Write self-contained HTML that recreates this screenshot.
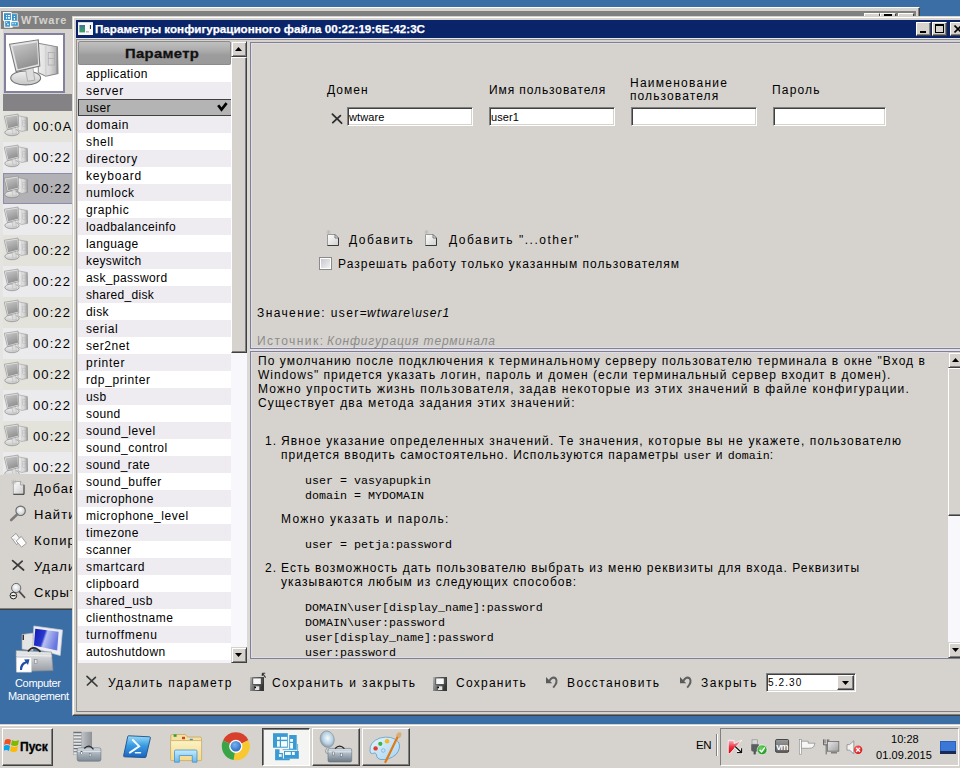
<!DOCTYPE html>
<html><head><meta charset="utf-8">
<style>
*{margin:0;padding:0;box-sizing:border-box}
html,body{width:960px;height:768px;overflow:hidden;background:#3a6ea5;font-family:"Liberation Sans",sans-serif;font-size:12px;color:#000}
.a{position:absolute}
.t{position:absolute;white-space:pre;line-height:16px}
.m{font-family:"Liberation Mono",monospace;font-size:11.67px;letter-spacing:0}
</style></head><body>
<div class="a" style="left:0px;top:7px;width:920px;height:603px;background:#d6d3ce;border-top:1px solid #fff;border-right:1px solid #404040;border-bottom:1px solid #404040"></div>
<div class="a" style="left:0px;top:8px;width:919px;height:601px;border-right:1px solid #808080;border-bottom:1px solid #808080"></div>
<div class="a" style="left:1px;top:11px;width:915px;height:18px;background:#808080"></div>
<div class="a" style="left:0px;top:29px;width:3px;height:446px;background:#e4e4e0"></div>
<svg class="a" style="left:2px;top:11px" width="18" height="18" viewBox="2 11 18 18">
<path d="M3 12 H11.6 V13.4 H17.6 V21.4 H18.6 V26.6 H12.6 V27.7 H4.2 V20.7 H3 Z" fill="#fff"/>
<rect x="4" y="13.2" width="6.9" height="6.8" fill="#3a94cc"/>
<rect x="12" y="14.1" width="4.9" height="6.7" fill="#3a94cc"/>
<rect x="5.2" y="21.1" width="4.8" height="5.6" fill="#3a94cc"/>
<rect x="11.3" y="22.2" width="6.5" height="3.6" fill="#3a94cc"/>
<g fill="#f0faff"><rect x="6" y="15" width="1.1" height="1.1"/><rect x="8" y="15" width="2" height="1.1"/><rect x="6" y="17" width="1.1" height="1.8"/><rect x="8" y="17" width="2" height="1.8"/>
<rect x="13.8" y="16" width="1.2" height="1"/><rect x="13.8" y="18" width="1.2" height="1.9"/>
<rect x="6.2" y="21.8" width="1" height="1.2"/><rect x="7.2" y="23.6" width="1.5" height="1.6"/>
<rect x="12.2" y="23.2" width="1.5" height="1.1"/><rect x="14.7" y="23.2" width="1.3" height="1.1"/></g>
</svg>
<div class="t" style="left:21px;top:12px;font-size:11px;letter-spacing:0.8px;font-weight:700;color:#d6d3ce;">WTware</div>
<div class="a" style="left:864px;top:13px;width:16px;height:14px;background:#d6d3ce;border-top:1px solid #fff;border-left:1px solid #fff;border-right:1px solid #404040"></div>
<div class="a" style="left:880px;top:13px;width:16px;height:14px;background:#d6d3ce;border-top:1px solid #fff;border-left:1px solid #fff;border-right:1px solid #404040"></div>
<div class="a" style="left:898px;top:13px;width:16px;height:14px;background:#d6d3ce;border-top:1px solid #fff;border-left:1px solid #fff;border-right:1px solid #404040"></div>
<div class="a" style="left:884px;top:14px;width:8px;height:2px;background:#000"></div>
<div class="a" style="left:4px;top:33px;width:61px;height:60px;background:#fff;border:2px solid #8282a0"></div>
<svg class="a" style="left:0;top:0;width:0;height:0;position:absolute">
<defs>
<linearGradient id="scr" x1="0" y1="0" x2="0.4" y2="1"><stop offset="0" stop-color="#cacaca"/><stop offset="1" stop-color="#929292"/></linearGradient>
<linearGradient id="twr" x1="0" y1="0" x2="1" y2="0"><stop offset="0" stop-color="#eeeeee"/><stop offset="0.6" stop-color="#d8d8d8"/><stop offset="1" stop-color="#a8a8a8"/></linearGradient>
<linearGradient id="bse" x1="0" y1="0" x2="0" y2="1"><stop offset="0" stop-color="#f0f0f0"/><stop offset="1" stop-color="#c6c6c6"/></linearGradient>
<symbol id="comp" viewBox="9.5 39 49.5 48">
<path d="M38.5 44 L57.5 47.5 L58 74 L46 76.5 L38.5 73 Z" fill="url(#twr)" stroke="#8a8a8a" stroke-width="1"/>
<path d="M46 46.5 L46 76.5" stroke="#c4c4c4" stroke-width="0.8"/>
<path d="M56.5 48 L57.5 48 L58 74 L56.5 74.5 Z" fill="#8e8e8e"/>
<rect x="48.3" y="53" width="6.3" height="12.5" fill="none" stroke="#acacac" stroke-width="0.8"/>
<path d="M48.3 59 H54.6" stroke="#acacac" stroke-width="0.8"/>
<ellipse cx="26" cy="78.3" rx="14.8" ry="6.9" fill="url(#bse)" stroke="#767676" stroke-width="1.1"/>
<path d="M25.5 68 L33 66.5 L35 80.5 L28 81.5 Z" fill="#dcdcdc" stroke="#a4a4a4" stroke-width="0.8"/>
<path d="M10 45 L38.5 40.5 L40 66.5 L16.5 72 Z" fill="#e4e4e4" stroke="#7c7c7c" stroke-width="1.1"/>
<path d="M12.8 47 L37.2 43.2 L38.3 64.8 L18.2 69.6 Z" fill="url(#scr)"/>
</symbol>
</defs></svg>
<svg class="a" style="left:9px;top:38px" width="50" height="49"><use href="#comp"/></svg>
<div class="a" style="left:3px;top:94px;width:70px;height:17px;background:#848284"></div>
<div class="a" style="left:3px;top:111px;width:70px;height:31px;background:#e3e3dc"></div>
<svg class="a" style="left:4px;top:113px;overflow:hidden" width="24" height="24"><svg width="24" height="24"><use href="#comp"/></svg></svg>
<div class="t" style="left:33px;top:119px;font-size:13px;letter-spacing:1.1px;">00:0A</div>
<div class="a" style="left:3px;top:142px;width:70px;height:31px;background:#ebebee"></div>
<svg class="a" style="left:4px;top:144px;overflow:hidden" width="24" height="24"><svg width="24" height="24"><use href="#comp"/></svg></svg>
<div class="t" style="left:33px;top:150px;font-size:13px;letter-spacing:1.1px;">00:22</div>
<div class="a" style="left:3px;top:173px;width:70px;height:31px;background:#b2b2b6;border:1px solid #8c8cac"></div>
<svg class="a" style="left:4px;top:175px;overflow:hidden" width="24" height="24"><svg width="24" height="24"><use href="#comp"/></svg></svg>
<div class="t" style="left:33px;top:181px;font-size:13px;letter-spacing:1.1px;">00:22</div>
<div class="a" style="left:3px;top:204px;width:70px;height:31px;background:#ebebee"></div>
<svg class="a" style="left:4px;top:206px;overflow:hidden" width="24" height="24"><svg width="24" height="24"><use href="#comp"/></svg></svg>
<div class="t" style="left:33px;top:212px;font-size:13px;letter-spacing:1.1px;">00:22</div>
<div class="a" style="left:3px;top:235px;width:70px;height:31px;background:#e3e3dc"></div>
<svg class="a" style="left:4px;top:237px;overflow:hidden" width="24" height="24"><svg width="24" height="24"><use href="#comp"/></svg></svg>
<div class="t" style="left:33px;top:243px;font-size:13px;letter-spacing:1.1px;">00:22</div>
<div class="a" style="left:3px;top:266px;width:70px;height:31px;background:#ebebee"></div>
<svg class="a" style="left:4px;top:268px;overflow:hidden" width="24" height="24"><svg width="24" height="24"><use href="#comp"/></svg></svg>
<div class="t" style="left:33px;top:274px;font-size:13px;letter-spacing:1.1px;">00:22</div>
<div class="a" style="left:3px;top:297px;width:70px;height:31px;background:#e3e3dc"></div>
<svg class="a" style="left:4px;top:299px;overflow:hidden" width="24" height="24"><svg width="24" height="24"><use href="#comp"/></svg></svg>
<div class="t" style="left:33px;top:305px;font-size:13px;letter-spacing:1.1px;">00:22</div>
<div class="a" style="left:3px;top:328px;width:70px;height:31px;background:#ebebee"></div>
<svg class="a" style="left:4px;top:330px;overflow:hidden" width="24" height="24"><svg width="24" height="24"><use href="#comp"/></svg></svg>
<div class="t" style="left:33px;top:336px;font-size:13px;letter-spacing:1.1px;">00:22</div>
<div class="a" style="left:3px;top:359px;width:70px;height:31px;background:#e3e3dc"></div>
<svg class="a" style="left:4px;top:361px;overflow:hidden" width="24" height="24"><svg width="24" height="24"><use href="#comp"/></svg></svg>
<div class="t" style="left:33px;top:367px;font-size:13px;letter-spacing:1.1px;">00:22</div>
<div class="a" style="left:3px;top:390px;width:70px;height:31px;background:#ebebee"></div>
<svg class="a" style="left:4px;top:392px;overflow:hidden" width="24" height="24"><svg width="24" height="24"><use href="#comp"/></svg></svg>
<div class="t" style="left:33px;top:398px;font-size:13px;letter-spacing:1.1px;">00:22</div>
<div class="a" style="left:3px;top:421px;width:70px;height:31px;background:#e3e3dc"></div>
<svg class="a" style="left:4px;top:423px;overflow:hidden" width="24" height="24"><svg width="24" height="24"><use href="#comp"/></svg></svg>
<div class="t" style="left:33px;top:429px;font-size:13px;letter-spacing:1.1px;">00:22</div>
<div class="a" style="left:3px;top:452px;width:70px;height:22px;background:#ebebee"></div>
<svg class="a" style="left:4px;top:454px;overflow:hidden" width="24" height="20"><svg width="24" height="24"><use href="#comp"/></svg></svg>
<div class="t" style="left:33px;top:460px;font-size:13px;letter-spacing:1.1px;">00:22</div>
<div class="t" style="left:34px;top:481px;font-size:13px;letter-spacing:1.1px;">Добавить</div>
<div class="t" style="left:34px;top:507px;font-size:13px;letter-spacing:1.1px;">Найти</div>
<div class="t" style="left:34px;top:533px;font-size:13px;letter-spacing:1.1px;">Копировать</div>
<div class="t" style="left:34px;top:559px;font-size:13px;letter-spacing:1.1px;">Удалить</div>
<div class="t" style="left:34px;top:585px;font-size:13px;letter-spacing:1.1px;">Скрыть</div>
<svg class="a" style="left:4px;top:476px" width="28" height="128" viewBox="4 476 28 128">
<defs><linearGradient id="mdg" x1="0" y1="0" x2="1" y2="1"><stop offset="0" stop-color="#ffffff"/><stop offset="1" stop-color="#c8c8c8"/></linearGradient>
<radialGradient id="lens" cx="0.45" cy="0.4" r="0.6"><stop offset="0" stop-color="#ffffff"/><stop offset="1" stop-color="#c4c8cc"/></radialGradient></defs>
<path d="M13.4 481.5 H20.6 L24 484.9 V494.3 H13.4 Z" fill="url(#mdg)" stroke="#a0a0a0" stroke-width="0.8"/>
<path d="M24 484.9 V494.3 H13.4" fill="none" stroke="#3a3a3a" stroke-width="1"/>
<path d="M20.6 481.5 V484.9 H24" fill="#e4e4e4" stroke="#777" stroke-width="0.6"/>
<path d="M11.6 480.2 L15.8 484.4 M15.8 480.2 L11.6 484.4 M13.7 479.6 V485 M11 482.3 H16.4" stroke="#b4b4b4" stroke-width="0.7"/>
<circle cx="20.6" cy="510.8" r="4.7" fill="url(#lens)" stroke="#6a6a6a" stroke-width="1.1"/>
<path d="M17.2 514.4 L11.2 520" stroke="#7a7a7a" stroke-width="2.6" stroke-linecap="round"/>
<path d="M11.2 537.6 L16 533.4 L21.2 540.4 L16.6 544.6 Z" fill="#f8f8f8" stroke="#8a8a8a" stroke-width="0.8"/>
<path d="M16.2 541 L21.2 536.4 L26.4 543.2 L21.6 547.2 Z" fill="#fcfcfc" stroke="#8a8a8a" stroke-width="0.8"/>
<path d="M13.2 539.5 Q14.5 538.5 15.5 540" fill="none" stroke="#aaa" stroke-width="0.6"/>
<path d="M12.6 560.6 L23.6 570 M22.2 561.2 L13.4 569.2" stroke="#3a3a3a" stroke-width="1.7" stroke-linecap="round"/>
<circle cx="16.2" cy="588" r="4.6" fill="url(#lens)" stroke="#6a6a6a" stroke-width="1"/>
<path d="M19.4 591.6 L24.6 597.4" stroke="#4a4a4a" stroke-width="1.6" stroke-linecap="round"/>
<circle cx="13.4" cy="595.6" r="3.3" fill="#f4f4f4" stroke="#222" stroke-width="1"/>
<path d="M11.3 595.6 H15.5" stroke="#222" stroke-width="1.3"/>
</svg>
<svg class="a" style="left:12px;top:620px" width="54" height="56" viewBox="12 620 54 56">
<defs><linearGradient id="cmb" x1="0" y1="0" x2="1" y2="0.3"><stop offset="0" stop-color="#1018b0"/><stop offset="0.45" stop-color="#2a38d0"/><stop offset="0.55" stop-color="#b8c0f0"/><stop offset="1" stop-color="#6878e0"/></linearGradient>
<linearGradient id="cmt" x1="0" y1="0" x2="0" y2="1"><stop offset="0" stop-color="#eeeeee"/><stop offset="0.5" stop-color="#c0c4c8"/><stop offset="1" stop-color="#9a9ea4"/></linearGradient></defs>
<path d="M22 634.5 L33 633 L33 651 L22 649 Z" fill="#e4e4e4" stroke="#b0b0b0" stroke-width="0.6"/>
<path d="M22.5 635 L24 634.8 L24 640 L22.5 640 Z" fill="#333"/>
<path d="M33.8 626 L62.5 630 L60.2 655.5 L33 648 Z" fill="#eceef4" stroke="#c8cad4" stroke-width="0.7"/>
<path d="M35.3 628.7 L58.6 631.7 L57.2 650.6 L33.9 645.5 Z" fill="url(#cmb)"/>
<path d="M16 650.5 L51.5 652 L53 670.5 L16.5 671.5 Z" fill="url(#cmt)" stroke="#8a8e94" stroke-width="0.7"/>
<path d="M16 655 L52 656" stroke="#f4f4f4" stroke-width="0.8"/>
<path d="M28 651.5 Q33.5 644 40.5 652" fill="none" stroke="#2a2a2a" stroke-width="1.6"/>
<rect x="34.5" y="659.5" width="2.5" height="4" fill="#e8e8e8" stroke="#777" stroke-width="0.5"/>
<rect x="16.7" y="657.5" width="14.6" height="14.6" fill="#fff" stroke="#d8d8d8" stroke-width="0.6"/>
<path d="M20 670 Q19.5 663 25.5 661.5 L24 659.5 L29.5 659.3 L28 665 L26.8 663.3 Q22.5 664.5 22 670 Z" fill="#1f4fa8"/>
</svg>
<div class="t" style="left:15px;top:675px;font-size:11px;letter-spacing:-0.343px;color:#fff;">Computer</div>
<div class="t" style="left:8px;top:688px;font-size:11px;letter-spacing:-0.35px;color:#fff;">Management</div>
<div class="a" style="left:72px;top:16px;width:900px;height:700px;background:#d6d3ce;border-top:1px solid #d6d3ce;border-left:1px solid #d6d3ce;border-bottom:1px solid #404040"></div>
<div class="a" style="left:73px;top:17px;width:899px;height:698px;border-top:1px solid #fff;border-left:1px solid #fff;border-bottom:1px solid #808080"></div>
<div class="a" style="left:76px;top:20px;width:900px;height:18px;background:#0a246a"></div>
<svg class="a" style="left:76px;top:20px" width="20" height="18" viewBox="76 20 20 18">
<defs><linearGradient id="ti" x1="0" y1="0" x2="0" y2="1"><stop offset="0" stop-color="#4a6aa0"/><stop offset="0.4" stop-color="#3a8a80"/><stop offset="1" stop-color="#3aa060"/></linearGradient></defs>
<rect x="78" y="22" width="15" height="13" fill="#f8f8f8"/>
<path d="M78 22.5 H93" stroke="#d8d8d8" stroke-width="1"/>
<rect x="79.4" y="25" width="5.6" height="7.4" fill="url(#ti)"/>
<rect x="86" y="31" width="2.9" height="1.5" fill="#c8b8a8"/>
<rect x="89.9" y="25" width="1.1" height="4" fill="#303040"/>
</svg>
<div class="t" style="left:95px;top:21px;font-size:11px;font-weight:700;color:#fff;transform:scaleX(1.058);transform-origin:0 0;-webkit-text-stroke:0.25px #fff;">Параметры конфигурационного файла 00:22:19:6E:42:3C</div>
<div class="a" style="left:916px;top:22px;width:15px;height:14px;background:#d6d3ce;border-top:1px solid #fff;border-left:1px solid #fff;border-right:1px solid #404040;border-bottom:1px solid #404040;box-shadow:inset -1px -1px 0 #808080"></div>
<div class="a" style="left:932px;top:22px;width:15px;height:14px;background:#d6d3ce;border-top:1px solid #fff;border-left:1px solid #fff;border-right:1px solid #404040;border-bottom:1px solid #404040;box-shadow:inset -1px -1px 0 #808080"></div>
<div class="a" style="left:950px;top:22px;width:16px;height:14px;background:#d6d3ce;border-top:1px solid #fff;border-left:1px solid #fff;border-right:1px solid #404040;border-bottom:1px solid #404040;box-shadow:inset -1px -1px 0 #808080"></div>
<div class="a" style="left:920px;top:31px;width:6px;height:2px;background:#000"></div>
<div class="a" style="left:935px;top:24px;width:9px;height:9px;border:1px solid #000;border-top-width:2px"></div>
<svg class="a" style="left:954px;top:25px" width="8" height="8" viewBox="0 0 8 8"><path d="M0.5 0.5 L7.5 7.5 M7.5 0.5 L0.5 7.5" stroke="#000" stroke-width="1.6"/></svg>
<div class="a" style="left:76px;top:38px;width:900px;height:1px;background:#e6e6ee"></div>
<div class="a" style="left:76px;top:39px;width:900px;height:673px;border-top:1px solid #909090;border-left:1px solid #909090;border-bottom:1px solid #808080"></div>
<div class="a" style="left:78px;top:41px;width:153px;height:24px;background:linear-gradient(#c0c0c0,#a8a8a8 45%,#9c9c9c 60%,#9a9a9a);border:1px solid #8c8c8c;border-radius:2px"></div>
<div class="t" style="left:125px;top:46px;font-size:13px;letter-spacing:0.3px;font-weight:700;color:#111;transform:scaleX(1.14);transform-origin:0 0;-webkit-text-stroke:0.3px #111;">Параметр</div>
<div class="a" style="left:78px;top:65px;width:153px;height:17px;background:#ffffff"></div>
<div class="t" style="left:86px;top:66px;font-size:12px;letter-spacing:0.4px;">application</div>
<div class="a" style="left:78px;top:82px;width:153px;height:17px;background:#eeecf1"></div>
<div class="t" style="left:86px;top:83px;font-size:12px;letter-spacing:0.8px;">server</div>
<div class="a" style="left:78px;top:99px;width:153px;height:17px;background:#b4b4b4;border:1px solid #404040;border-right:0"></div>
<div class="t" style="left:86px;top:100px;font-size:12px;letter-spacing:0.4px;">user</div>
<div class="a" style="left:78px;top:116px;width:153px;height:17px;background:#eeecf1"></div>
<div class="t" style="left:86px;top:117px;font-size:12px;letter-spacing:0.6px;">domain</div>
<div class="a" style="left:78px;top:133px;width:153px;height:17px;background:#ffffff"></div>
<div class="t" style="left:86px;top:134px;font-size:12px;letter-spacing:0.65px;">shell</div>
<div class="a" style="left:78px;top:150px;width:153px;height:17px;background:#eeecf1"></div>
<div class="t" style="left:86px;top:151px;font-size:12px;letter-spacing:0.65px;">directory</div>
<div class="a" style="left:78px;top:167px;width:153px;height:17px;background:#ffffff"></div>
<div class="t" style="left:86px;top:168px;font-size:12px;letter-spacing:0.829px;">keyboard</div>
<div class="a" style="left:78px;top:184px;width:153px;height:17px;background:#eeecf1"></div>
<div class="t" style="left:86px;top:185px;font-size:12px;letter-spacing:0.567px;">numlock</div>
<div class="a" style="left:78px;top:201px;width:153px;height:17px;background:#ffffff"></div>
<div class="t" style="left:86px;top:202px;font-size:12px;letter-spacing:0.567px;">graphic</div>
<div class="a" style="left:78px;top:218px;width:153px;height:17px;background:#eeecf1"></div>
<div class="t" style="left:86px;top:219px;font-size:12px;letter-spacing:0.4px;">loadbalanceinfo</div>
<div class="a" style="left:78px;top:235px;width:153px;height:17px;background:#ffffff"></div>
<div class="t" style="left:86px;top:236px;font-size:12px;letter-spacing:0.4px;">language</div>
<div class="a" style="left:78px;top:252px;width:153px;height:17px;background:#eeecf1"></div>
<div class="t" style="left:86px;top:253px;font-size:12px;letter-spacing:0.4px;">keyswitch</div>
<div class="a" style="left:78px;top:269px;width:153px;height:17px;background:#ffffff"></div>
<div class="t" style="left:86px;top:270px;font-size:12px;letter-spacing:0.4px;">ask_password</div>
<div class="a" style="left:78px;top:286px;width:153px;height:17px;background:#eeecf1"></div>
<div class="t" style="left:86px;top:287px;font-size:12px;letter-spacing:0.3px;">shared_disk</div>
<div class="a" style="left:78px;top:303px;width:153px;height:17px;background:#ffffff"></div>
<div class="t" style="left:86px;top:304px;font-size:12px;letter-spacing:0.4px;">disk</div>
<div class="a" style="left:78px;top:320px;width:153px;height:17px;background:#eeecf1"></div>
<div class="t" style="left:86px;top:321px;font-size:12px;letter-spacing:0.6px;">serial</div>
<div class="a" style="left:78px;top:337px;width:153px;height:17px;background:#ffffff"></div>
<div class="t" style="left:86px;top:338px;font-size:12px;letter-spacing:0.567px;">ser2net</div>
<div class="a" style="left:78px;top:354px;width:153px;height:17px;background:#eeecf1"></div>
<div class="t" style="left:86px;top:355px;font-size:12px;letter-spacing:0.733px;">printer</div>
<div class="a" style="left:78px;top:371px;width:153px;height:17px;background:#ffffff"></div>
<div class="t" style="left:86px;top:372px;font-size:12px;letter-spacing:0.6px;">rdp_printer</div>
<div class="a" style="left:78px;top:388px;width:153px;height:17px;background:#eeecf1"></div>
<div class="t" style="left:86px;top:389px;font-size:12px;letter-spacing:0.4px;">usb</div>
<div class="a" style="left:78px;top:405px;width:153px;height:17px;background:#ffffff"></div>
<div class="t" style="left:86px;top:406px;font-size:12px;letter-spacing:0.4px;">sound</div>
<div class="a" style="left:78px;top:422px;width:153px;height:17px;background:#eeecf1"></div>
<div class="t" style="left:86px;top:423px;font-size:12px;letter-spacing:0.5px;">sound_level</div>
<div class="a" style="left:78px;top:439px;width:153px;height:17px;background:#ffffff"></div>
<div class="t" style="left:86px;top:440px;font-size:12px;letter-spacing:0.483px;">sound_control</div>
<div class="a" style="left:78px;top:456px;width:153px;height:17px;background:#eeecf1"></div>
<div class="t" style="left:86px;top:457px;font-size:12px;letter-spacing:0.4px;">sound_rate</div>
<div class="a" style="left:78px;top:473px;width:153px;height:17px;background:#ffffff"></div>
<div class="t" style="left:86px;top:474px;font-size:12px;letter-spacing:0.491px;">sound_buffer</div>
<div class="a" style="left:78px;top:490px;width:153px;height:17px;background:#eeecf1"></div>
<div class="t" style="left:86px;top:491px;font-size:12px;letter-spacing:0.511px;">microphone</div>
<div class="a" style="left:78px;top:507px;width:153px;height:17px;background:#ffffff"></div>
<div class="t" style="left:86px;top:508px;font-size:12px;letter-spacing:0.533px;">microphone_level</div>
<div class="a" style="left:78px;top:524px;width:153px;height:17px;background:#eeecf1"></div>
<div class="t" style="left:86px;top:525px;font-size:12px;letter-spacing:0.543px;">timezone</div>
<div class="a" style="left:78px;top:541px;width:153px;height:17px;background:#ffffff"></div>
<div class="t" style="left:86px;top:542px;font-size:12px;letter-spacing:0.4px;">scanner</div>
<div class="a" style="left:78px;top:558px;width:153px;height:17px;background:#eeecf1"></div>
<div class="t" style="left:86px;top:559px;font-size:12px;letter-spacing:0.65px;">smartcard</div>
<div class="a" style="left:78px;top:575px;width:153px;height:17px;background:#ffffff"></div>
<div class="t" style="left:86px;top:576px;font-size:12px;letter-spacing:0.525px;">clipboard</div>
<div class="a" style="left:78px;top:592px;width:153px;height:17px;background:#eeecf1"></div>
<div class="t" style="left:86px;top:593px;font-size:12px;letter-spacing:0.4px;">shared_usb</div>
<div class="a" style="left:78px;top:609px;width:153px;height:17px;background:#ffffff"></div>
<div class="t" style="left:86px;top:610px;font-size:12px;letter-spacing:0.477px;">clienthostname</div>
<div class="a" style="left:78px;top:626px;width:153px;height:17px;background:#eeecf1"></div>
<div class="t" style="left:86px;top:627px;font-size:12px;letter-spacing:0.7px;">turnoffmenu</div>
<div class="a" style="left:78px;top:643px;width:153px;height:17px;background:#ffffff"></div>
<div class="t" style="left:86px;top:644px;font-size:12px;letter-spacing:0.4px;">autoshutdown</div>
<div class="a" style="left:78px;top:660px;width:153px;height:3px;background:#f4f2f8"></div>
<svg class="a" style="left:214px;top:100px" width="16" height="14" viewBox="214 100 16 14"><path d="M218.2 105.2 L221.5 109.6 L226.6 103.2" fill="none" stroke="#000" stroke-width="2.7" stroke-linejoin="miter"/></svg>
<div class="a" style="left:231px;top:41px;width:16px;height:622px;background:#f8f7fb"></div>
<div class="a" style="left:231px;top:41px;width:16px;height:16px;background:#d6d3ce;border-top:1px solid #d6d3ce;border-left:1px solid #d6d3ce;border-right:1px solid #404040;border-bottom:1px solid #404040;box-shadow:inset 1px 1px 0 #fff, inset -1px -1px 0 #808080"></div>
<svg class="a" style="left:235px;top:47px" width="7" height="4" viewBox="0 0 7 4"><path d="M0 4H7L3.5 0Z" fill="#000"/></svg>
<div class="a" style="left:231px;top:57px;width:16px;height:296px;background:#d6d3ce;border-top:1px solid #fff;border-left:1px solid #fff;border-right:1px solid #404040;border-bottom:1px solid #404040;box-shadow:inset -1px -1px 0 #808080"></div>
<div class="a" style="left:231px;top:647px;width:16px;height:16px;background:#d6d3ce;border-top:1px solid #d6d3ce;border-left:1px solid #d6d3ce;border-right:1px solid #404040;border-bottom:1px solid #404040;box-shadow:inset 1px 1px 0 #fff, inset -1px -1px 0 #808080"></div>
<svg class="a" style="left:235px;top:653px" width="7" height="4" viewBox="0 0 7 4"><path d="M0 0H7L3.5 4Z" fill="#000"/></svg>
<div class="a" style="left:76px;top:41px;width:1px;height:622px;background:#909090"></div>
<div class="a" style="left:250px;top:42px;width:720px;height:307px;border:1px solid #82808f;box-shadow:inset 1px 1px 0 #dedce8, inset -1px -1px 0 #dedce8"></div>
<div class="t" style="left:327px;top:82px;font-size:12px;letter-spacing:1.05px;">Домен</div>
<div class="t" style="left:489px;top:82px;font-size:12px;letter-spacing:0.903px;">Имя пользователя</div>
<div class="t" style="left:630px;top:75px;font-size:12px;letter-spacing:1.253px;">Наименование</div>
<div class="t" style="left:630px;top:88px;font-size:12px;letter-spacing:1.103px;">пользователя</div>
<div class="t" style="left:772px;top:82px;font-size:12px;letter-spacing:1.17px;">Пароль</div>
<div class="a" style="left:347px;top:107px;width:126px;height:19px;background:#fff;border-top:1px solid #808080;border-left:1px solid #808080;border-bottom:1px solid #fff;border-right:1px solid #fff;box-shadow:inset 1px 1px 0 #404040, inset -1px -1px 0 #d6d3ce"></div>
<div class="t" style="left:349px;top:109px;font-size:11px;letter-spacing:0.1px;">wtware</div>
<div class="a" style="left:489px;top:107px;width:126px;height:19px;background:#fff;border-top:1px solid #808080;border-left:1px solid #808080;border-bottom:1px solid #fff;border-right:1px solid #fff;box-shadow:inset 1px 1px 0 #404040, inset -1px -1px 0 #d6d3ce"></div>
<div class="t" style="left:491px;top:109px;font-size:11px;letter-spacing:0.1px;">user1</div>
<div class="a" style="left:631px;top:107px;width:126px;height:19px;background:#fff;border-top:1px solid #808080;border-left:1px solid #808080;border-bottom:1px solid #fff;border-right:1px solid #fff;box-shadow:inset 1px 1px 0 #404040, inset -1px -1px 0 #d6d3ce"></div>
<div class="a" style="left:773px;top:107px;width:113px;height:19px;background:#fff;border-top:1px solid #808080;border-left:1px solid #808080;border-bottom:1px solid #fff;border-right:1px solid #fff;box-shadow:inset 1px 1px 0 #404040, inset -1px -1px 0 #d6d3ce"></div>
<svg class="a" style="left:328px;top:110px" width="18" height="18" viewBox="328 110 18 18"><path d="M332.4 114.2 L341.6 123.2 M340.4 115.6 L332.8 122.6" stroke="#2e2e2e" stroke-width="1.8" stroke-linecap="round"/></svg>
<svg class="a" style="left:326px;top:230px" width="16" height="17" viewBox="0 0 16 17">
<defs><linearGradient id="dg326" x1="0" y1="0" x2="1" y2="1"><stop offset="0" stop-color="#ffffff"/><stop offset="1" stop-color="#cfcfcf"/></linearGradient></defs>
<path d="M1.5 4.5 H9 L12.5 8 V15.5 H1.5 Z" fill="url(#dg326)" stroke="#9a9a9a" stroke-width="1"/>
<path d="M12.5 8 V15.5 H1.5" fill="none" stroke="#3a3a3a" stroke-width="1"/>
<path d="M9 4.5 L12.5 8 H9 Z" fill="#e8e8e8" stroke="#666" stroke-width="0.8"/>
<path d="M1 0.5 L4 3.5 M4 0.5 L1 3.5 M2.5 0 V4 M0.5 2 H4.5" stroke="#b8b8b8" stroke-width="0.7"/>
</svg>
<svg class="a" style="left:424px;top:230px" width="16" height="17" viewBox="0 0 16 17">
<defs><linearGradient id="dg424" x1="0" y1="0" x2="1" y2="1"><stop offset="0" stop-color="#ffffff"/><stop offset="1" stop-color="#cfcfcf"/></linearGradient></defs>
<path d="M1.5 4.5 H9 L12.5 8 V15.5 H1.5 Z" fill="url(#dg424)" stroke="#9a9a9a" stroke-width="1"/>
<path d="M12.5 8 V15.5 H1.5" fill="none" stroke="#3a3a3a" stroke-width="1"/>
<path d="M9 4.5 L12.5 8 H9 Z" fill="#e8e8e8" stroke="#666" stroke-width="0.8"/>
<path d="M1 0.5 L4 3.5 M4 0.5 L1 3.5 M2.5 0 V4 M0.5 2 H4.5" stroke="#b8b8b8" stroke-width="0.7"/>
</svg>
<div class="t" style="left:349px;top:232px;font-size:12px;letter-spacing:1.536px;">Добавить</div>
<div class="t" style="left:449px;top:232px;font-size:12px;letter-spacing:1.511px;">Добавить "...other"</div>
<div class="a" style="left:319px;top:257px;width:13px;height:13px;background:linear-gradient(135deg,#c4c4cc,#f6f6f6);border:1px solid #8a8a8a;box-shadow:inset 1px 1px 0 #fff, inset -1px -1px 0 #fff"></div>
<div class="t" style="left:338px;top:256px;font-size:12px;letter-spacing:1.023px;">Разрешать работу только указанным пользователям</div>
<div class="t" style="left:257px;top:305px;font-size:12px;letter-spacing:1.39px;">Значение: user=</div>
<div class="t" style="left:367px;top:305px;font-size:12px;letter-spacing:0.982px;font-style:italic;">wtware\user1</div>
<div class="t" style="left:257px;top:333px;font-size:12px;letter-spacing:1.432px;color:#8c8c8c;">Источник:</div>
<div class="t" style="left:327px;top:333px;font-size:12px;letter-spacing:0.843px;color:#8c8c8c;font-style:italic;">Конфигурация терминала</div>
<div class="a" style="left:250px;top:349px;width:720px;height:2px;background:#e2e0ea"></div>
<div class="a" style="left:247px;top:42px;width:3px;height:617px;background:#dcdad6"></div>
<div class="a" style="left:250px;top:351px;width:720px;height:308px;border:1px solid #82808f;box-shadow:inset 1px 1px 0 #dedce8, inset -1px -1px 0 #dedce8"></div>
<div class="t" style="left:258px;top:353px;font-size:12px;letter-spacing:1.055px;">По умолчанию после подключения к терминальному серверу пользователю терминала в окне "Вход в</div>
<div class="t" style="left:258px;top:367px;font-size:12px;letter-spacing:1.034px;">Windows" придется указать логин, пароль и домен (если терминальный сервер входит в домен).</div>
<div class="t" style="left:258px;top:381px;font-size:12px;letter-spacing:1.157px;">Можно упростить жизнь пользователя, задав некоторые из этих значений в файле конфигурации.</div>
<div class="t" style="left:258px;top:395px;font-size:12px;letter-spacing:1.14px;">Существует два метода задания этих значений:</div>
<div class="t" style="left:265px;top:433px;font-size:12px;letter-spacing:1.0px;">1.</div>
<div class="t" style="left:281px;top:433px;font-size:12px;letter-spacing:1.141px;">Явное указание определенных значений. Те значения, которые вы не укажете, пользователю</div>
<div class="t" style="left:281px;top:447px;font-size:12px;letter-spacing:1.0px;">придется вводить самостоятельно. Используются параметры <span class="m">user</span> и <span class="m">domain</span>:</div>
<div class="t" style="left:281px;top:511px;font-size:12px;letter-spacing:1.273px;">Можно указать и пароль:</div>
<div class="t" style="left:265px;top:560px;font-size:12px;letter-spacing:1.0px;">2.</div>
<div class="t" style="left:281px;top:560px;font-size:12px;letter-spacing:1.012px;">Есть возможность дать пользователю выбрать из меню реквизиты для входа. Реквизиты</div>
<div class="t" style="left:281px;top:574px;font-size:12px;letter-spacing:1.0px;">указываются любым из следующих способов:</div>
<div class="t" style="left:305px;top:473px;font-size:11.67px;font-family:'Liberation Mono',monospace;">user = vasyapupkin</div>
<div class="t" style="left:305px;top:488px;font-size:11.67px;font-family:'Liberation Mono',monospace;">domain = MYDOMAIN</div>
<div class="t" style="left:305px;top:537px;font-size:11.67px;font-family:'Liberation Mono',monospace;">user = petja:password</div>
<div class="t" style="left:305px;top:600px;font-size:11.67px;font-family:'Liberation Mono',monospace;">DOMAIN\user[display_name]:password</div>
<div class="t" style="left:305px;top:615px;font-size:11.67px;font-family:'Liberation Mono',monospace;">DOMAIN\user:password</div>
<div class="t" style="left:305px;top:630px;font-size:11.67px;font-family:'Liberation Mono',monospace;">user[display_name]:password</div>
<div class="t" style="left:305px;top:645px;font-size:11.67px;font-family:'Liberation Mono',monospace;">user:password</div>
<div class="a" style="left:948px;top:353px;width:16px;height:290px;background:#f8f7fb"></div>
<div class="a" style="left:948px;top:352px;width:16px;height:16px;background:#d6d3ce;border-top:1px solid #d6d3ce;border-left:1px solid #d6d3ce;border-right:1px solid #404040;border-bottom:1px solid #404040;box-shadow:inset 1px 1px 0 #fff, inset -1px -1px 0 #808080"></div>
<svg class="a" style="left:952px;top:358px" width="7" height="4" viewBox="0 0 7 4"><path d="M0 4H7L3.5 0Z" fill="#000"/></svg>
<div class="a" style="left:948px;top:368px;width:16px;height:148px;background:#d6d3ce;border-top:1px solid #fff;border-left:1px solid #fff;border-right:1px solid #404040;border-bottom:1px solid #404040;box-shadow:inset -1px -1px 0 #808080"></div>
<div class="a" style="left:948px;top:642px;width:16px;height:16px;background:#d6d3ce;border-top:1px solid #d6d3ce;border-left:1px solid #d6d3ce;border-right:1px solid #404040;border-bottom:1px solid #404040;box-shadow:inset 1px 1px 0 #fff, inset -1px -1px 0 #808080"></div>
<svg class="a" style="left:952px;top:648px" width="7" height="4" viewBox="0 0 7 4"><path d="M0 0H7L3.5 4Z" fill="#000"/></svg>
<svg class="a" style="left:82px;top:672px" width="18" height="18" viewBox="82 672 18 18"><path d="M87 676.3 L97 686 M95.4 677.4 L87.4 685" stroke="#3a3a3a" stroke-width="1.7" stroke-linecap="round"/></svg>
<div class="t" style="left:108px;top:675px;font-size:12px;letter-spacing:1.4px;">Удалить параметр</div>
<svg class="a" style="left:246px;top:668px" width="24" height="24" viewBox="246 668 24 24">
<defs><linearGradient id="fl0" x1="0" y1="0" x2="1" y2="0.3"><stop offset="0" stop-color="#b4b4b4"/><stop offset="0.5" stop-color="#6a6a6a"/><stop offset="1" stop-color="#363636"/></linearGradient></defs>
<rect x="250" y="677" width="14" height="14" fill="url(#fl0)"/>
<rect x="252.8" y="678" width="8.4" height="6.4" fill="#f6f6f6" stroke="#3a3a3a" stroke-width="0.7"/>
<rect x="261.6" y="678.6" width="1.4" height="5" fill="#505050"/>
<rect x="255" y="686.3" width="4.3" height="3.7" fill="#e4e4e4"/>
<rect x="254.4" y="686.6" width="1.6" height="1.6" fill="#000"/>
<path d="M262.3 673.2 H265.2 M262.3 673.2 V676 M262.6 673.5 L265.6 677.6" stroke="#333" stroke-width="1.1" fill="none"/>
</svg>
<div class="t" style="left:272px;top:675px;font-size:12px;letter-spacing:1.422px;">Сохранить и закрыть</div>
<svg class="a" style="left:429px;top:668px" width="24" height="24" viewBox="246 668 24 24">
<defs><linearGradient id="fl183" x1="0" y1="0" x2="1" y2="0.3"><stop offset="0" stop-color="#b4b4b4"/><stop offset="0.5" stop-color="#6a6a6a"/><stop offset="1" stop-color="#363636"/></linearGradient></defs>
<rect x="250" y="677" width="14" height="14" fill="url(#fl183)"/>
<rect x="252.8" y="678" width="8.4" height="6.4" fill="#f6f6f6" stroke="#3a3a3a" stroke-width="0.7"/>
<rect x="261.6" y="678.6" width="1.4" height="5" fill="#505050"/>
<rect x="255" y="686.3" width="4.3" height="3.7" fill="#e4e4e4"/>
<rect x="254.4" y="686.6" width="1.6" height="1.6" fill="#000"/>

</svg>
<div class="t" style="left:456px;top:675px;font-size:12px;letter-spacing:1.25px;">Сохранить</div>
<svg class="a" style="left:544px;top:674px" width="16" height="16" viewBox="544 674 16 16">
<path d="M546 677 L546 683.2 L552.2 683.2 Z" fill="#5a5a5a"/>
<path d="M549.2 681 Q552.5 675.8 555.8 678.6 Q558.2 682 553.2 687.6" fill="none" stroke="#606060" stroke-width="2"/>
</svg>
<div class="t" style="left:567px;top:675px;font-size:12px;letter-spacing:1.382px;">Восстановить</div>
<svg class="a" style="left:678px;top:674px" width="16" height="16" viewBox="544 674 16 16">
<path d="M546 677 L546 683.2 L552.2 683.2 Z" fill="#5a5a5a"/>
<path d="M549.2 681 Q552.5 675.8 555.8 678.6 Q558.2 682 553.2 687.6" fill="none" stroke="#606060" stroke-width="2"/>
</svg>
<div class="t" style="left:701px;top:675px;font-size:12px;letter-spacing:1.55px;">Закрыть</div>
<div class="a" style="left:766px;top:673px;width:90px;height:19px;background:#fff;border-top:1px solid #808080;border-left:1px solid #808080;border-bottom:1px solid #fff;border-right:1px solid #fff;box-shadow:inset 1px 1px 0 #404040, inset -1px -1px 0 #d6d3ce"></div>
<div class="t" style="left:768px;top:675px;font-size:10px;letter-spacing:1.1px;">5.2.30</div>
<div class="a" style="left:837px;top:675px;width:17px;height:15px;background:#d6d3ce;border-top:1px solid #fff;border-left:1px solid #fff;border-right:1px solid #404040;border-bottom:1px solid #404040;box-shadow:inset -1px -1px 0 #808080"></div>
<svg class="a" style="left:842px;top:681px" width="7" height="4" viewBox="0 0 7 4"><path d="M0 0H7L3.5 4Z" fill="#000"/></svg>
<div class="a" style="left:0px;top:724px;width:960px;height:44px;background:#d6d3ce;border-top:1px solid #d6d3ce"></div>
<div class="a" style="left:0px;top:725px;width:960px;height:1px;background:#fff"></div>
<div class="a" style="left:2px;top:728px;width:51px;height:38px;background:#d6d3ce;border-top:1px solid #fff;border-left:1px solid #fff;border-right:1px solid #404040;border-bottom:1px solid #404040;box-shadow:inset -1px -1px 0 #808080"></div>
<svg class="a" style="left:4px;top:738px" width="16" height="15" viewBox="0 0 16 15">
<path d="M1 2 Q4 0 7 2 L6 7 Q3 5 0 7 Z" fill="#f05022"/>
<path d="M8 2 Q11 4 15 2 L14 7 Q11 9 7 7 Z" fill="#7fba00"/>
<path d="M0 8 Q3 6 6 8 L5 13 Q2 11 -1 13 Z" fill="#00a4ef"/>
<path d="M7 8 Q10 10 14 8 L13 13 Q10 15 6 13 Z" fill="#ffb900"/>
</svg>
<div class="t" style="left:20px;top:739px;font-size:12px;font-weight:700;-webkit-text-stroke:0.3px #000;">Пуск</div>
<svg class="a" style="left:68px;top:728px" width="40" height="38" viewBox="68 728 40 38">
<defs><linearGradient id="tb" x1="0" y1="0" x2="0" y2="1"><stop offset="0" stop-color="#d4dae0"/><stop offset="0.5" stop-color="#a4aeb8"/><stop offset="1" stop-color="#7c8894"/></linearGradient>
<linearGradient id="sv" x1="0" y1="0" x2="1" y2="0"><stop offset="0" stop-color="#c0c4c8"/><stop offset="1" stop-color="#8e9296"/></linearGradient></defs>
<rect x="81.5" y="731.8" width="10.5" height="23" fill="url(#sv)"/>
<rect x="73.4" y="731.8" width="8.2" height="23" fill="#e2e4e6" stroke="#9a9ea2" stroke-width="0.5"/>
<path d="M73.6 732.6 H81.4 M73.6 735.8 H81.4 M73.6 739 H81.4 M73.6 742.2 H81.4 M73.6 745.4 H81.4 M73.6 748.6 H81.4 M73.6 751.8 H81.4" stroke="#6a6e72" stroke-width="1.1"/>
<path d="M77.2 749.5 Q77.2 747.8 79 747.8 H99 Q100.9 747.8 100.9 749.5 V759.5 Q100.9 761.2 99 761.2 H79 Q77.2 761.2 77.2 759.5 Z" fill="url(#tb)" stroke="#6a7480" stroke-width="0.6"/>
<path d="M77.5 751.5 H100.6" stroke="#e8eef4" stroke-width="0.7"/>
<path d="M84.3 748.5 Q88.8 743.2 93.5 749.3" fill="none" stroke="#2a2a2a" stroke-width="1.3"/>
<rect x="80.8" y="751.6" width="1.8" height="3" fill="#f0f0f0" stroke="#555" stroke-width="0.4"/>
<rect x="89.2" y="753.4" width="1.8" height="3" fill="#f0f0f0" stroke="#555" stroke-width="0.4"/>
</svg>
<svg class="a" style="left:118px;top:730px" width="36" height="32" viewBox="118 730 36 32">
<defs><linearGradient id="ps" x1="0" y1="0" x2="0" y2="1"><stop offset="0" stop-color="#9adcf8"/><stop offset="0.45" stop-color="#3a9ae0"/><stop offset="1" stop-color="#1a62c0"/></linearGradient></defs>
<path d="M127.8 736.3 Q128 735.8 129 735.8 L149.5 736.8 Q150.6 737 150.4 738 L146 756.8 Q145.8 757.6 145 757.6 L124.5 756.8 Q123.4 756.6 123.6 755.8 Z" fill="url(#ps)" stroke="#1c4f8a" stroke-width="0.9"/>
<path d="M132.8 740 L139.2 746.3 L129.8 752.6" fill="none" stroke="#f4fcff" stroke-width="1.9" stroke-linecap="round"/>
<path d="M135.4 752.7 H140.5" stroke="#e8f6ff" stroke-width="1.6" stroke-linecap="round"/>
</svg>
<svg class="a" style="left:166px;top:728px" width="90" height="38" viewBox="166 728 90 38">
<defs><linearGradient id="fb" x1="0" y1="0" x2="0" y2="1"><stop offset="0" stop-color="#fdf2c4"/><stop offset="1" stop-color="#f2d98e"/></linearGradient>
<linearGradient id="fs" x1="0" y1="0" x2="0" y2="1"><stop offset="0" stop-color="#c4ecff"/><stop offset="1" stop-color="#6ab8ec"/></linearGradient>
<radialGradient id="cb" cx="0.4" cy="0.35" r="0.7"><stop offset="0" stop-color="#7ab4f0"/><stop offset="1" stop-color="#2a66c0"/></radialGradient></defs>
<path d="M170.8 742 V736 Q170.8 734.5 172.5 734.5 H185.5 L187.5 737 H200 Q201.5 737 201.5 738.5 V742 Z" fill="#f4e0a0" stroke="#c8a660" stroke-width="0.8"/>
<rect x="173.6" y="734.4" width="3" height="2.4" fill="#2aa034"/>
<rect x="182" y="736.8" width="3" height="2.4" fill="#d04424"/>
<rect x="189.8" y="738.8" width="3" height="2.4" fill="#3a90d0"/>
<rect x="170.6" y="740.6" width="31" height="20" rx="0.8" fill="url(#fb)" stroke="#c9a862" stroke-width="0.8"/>
<path d="M174.5 762.2 V751.2 Q174.5 750 175.8 750 H195.8 Q197 750 197 751.2 V762.2 H192.3 V755.5 H179.3 V762.2 Z" fill="url(#fs)" stroke="#4a92c8" stroke-width="0.8"/>
<path d="M235.8 746.3 L223 740.6 A14 14 0 0 1 248.4 740.2 Z" fill="#d8402e"/>
<path d="M235.8 746.3 L248.4 740.2 A14 14 0 0 1 233.6 760.1 Z" fill="#f8c830"/>
<path d="M235.8 746.3 L233.6 760.1 A14 14 0 0 1 223 740.6 Z" fill="#3aa446"/>
<circle cx="235.8" cy="746.3" r="6.6" fill="#fff"/>
<circle cx="235.8" cy="746.3" r="5.3" fill="url(#cb)"/>
</svg>
<div class="a" style="left:262px;top:728px;width:48px;height:38px;background:#f4f4f2;border-top:1px solid #404040;border-left:1px solid #404040;border-right:1px solid #fff;border-bottom:1px solid #fff;box-shadow:inset 1px 1px 0 #808080"></div>
<div class="a" style="left:312px;top:728px;width:48px;height:38px;background:#d6d3ce;border-top:1px solid #fff;border-left:1px solid #fff;border-right:1px solid #404040;border-bottom:1px solid #404040;box-shadow:inset -1px -1px 0 #808080"></div>
<div class="a" style="left:362px;top:728px;width:48px;height:38px;background:#d6d3ce;border-top:1px solid #fff;border-left:1px solid #fff;border-right:1px solid #404040;border-bottom:1px solid #404040;box-shadow:inset -1px -1px 0 #808080"></div>
<svg class="a" style="left:266px;top:728px" width="40" height="36" viewBox="266 728 40 36">
<g fill="#3a9ad2">
<rect x="273" y="733.2" width="14.8" height="14.5"/>
<rect x="289.2" y="735" width="7.5" height="14.6"/>
<path d="M275.1 749.3 H279.5 V753 H282.9 V758.5 H289.7 V760.3 H275.1 Z"/>
<rect x="284" y="751" width="14.8" height="7.7"/>
</g>
<g fill="#f4fcff">
<rect x="277" y="736.9" width="2.8" height="2.8"/><rect x="281" y="736.9" width="6.1" height="2.8"/>
<rect x="277" y="741.1" width="2.8" height="5.6"/><rect x="281" y="741.1" width="6.1" height="5.6"/>
<rect x="290.1" y="739" width="2.9" height="2.8"/><rect x="290.1" y="743" width="2.9" height="5.6"/>
<rect x="278.9" y="754.2" width="2.8" height="2.6"/>
<rect x="285" y="751.9" width="5.8" height="3.1"/><rect x="292" y="751.9" width="2.8" height="3.1"/>
</g>
<path d="M282.6 749.6 H296.7 M297.6 744 V758.8" stroke="#3a9ad2" stroke-width="0.7"/>
</svg>
<svg class="a" style="left:312px;top:729px" width="98" height="36" viewBox="312 729 98 36">
<defs><radialGradient id="dish" cx="0.55" cy="0.45" r="0.6"><stop offset="0" stop-color="#f4fbff"/><stop offset="0.6" stop-color="#b8cfe0"/><stop offset="1" stop-color="#7a8a98"/></radialGradient>
<linearGradient id="tb2" x1="0" y1="0" x2="0" y2="1"><stop offset="0" stop-color="#d8e0e8"/><stop offset="0.5" stop-color="#a0acb8"/><stop offset="1" stop-color="#6c7884"/></linearGradient>
<linearGradient id="pal" x1="0" y1="0" x2="1" y2="1"><stop offset="0" stop-color="#e4f4fc"/><stop offset="1" stop-color="#a8d4f0"/></linearGradient></defs>
<ellipse cx="327.2" cy="739.2" rx="7" ry="8.4" transform="rotate(-15 327.2 739.2)" fill="url(#dish)" stroke="#8c9aa6" stroke-width="0.7"/>
<path d="M327 748 Q324 751 326 753 Q328 754.5 330 753" fill="none" stroke="#9aa4ae" stroke-width="1"/>
<path d="M328 750 Q328 748.4 329.6 748.4 H350 Q351.7 748.4 351.7 750 V760.4 Q351.7 762 350 762 H329.6 Q328 762 328 760.4 Z" fill="url(#tb2)" stroke="#66707a" stroke-width="0.6"/>
<path d="M328.3 751.8 H351.4" stroke="#eef3f8" stroke-width="0.7"/>
<path d="M335 748.6 Q339.7 743.6 344.4 748.6" fill="none" stroke="#222" stroke-width="1.3"/>
<rect x="332.4" y="752" width="1.8" height="3" fill="#eee" stroke="#555" stroke-width="0.4"/>
<rect x="340.4" y="753.2" width="1.8" height="3" fill="#eee" stroke="#555" stroke-width="0.4"/>
<path d="M370 751 Q369 742 380 738 Q392 735 398.5 742 Q401.5 748 396 754.5 Q389 760.5 381 759.5 Q376.5 758.8 376.5 755 Q376 752 372.5 753.5 Q370.2 754 370 751 Z" fill="url(#pal)" stroke="#5c9cc8" stroke-width="0.8"/>
<circle cx="375.6" cy="748.4" r="2.2" fill="#e03a2a"/>
<circle cx="380.3" cy="743.8" r="2.1" fill="#3cb040"/>
<circle cx="387.1" cy="741.2" r="2.3" fill="#f4b820"/>
<circle cx="383.3" cy="750.5" r="1.8" fill="none" stroke="#6a9ec4" stroke-width="0.6"/>
<path d="M397.8 736.5 L385.4 762" stroke="#e07a18" stroke-width="2.2" stroke-linecap="round"/>
<path d="M396 735.5 Q397.5 731.5 401 732.5 Q402.5 735 399.5 738.2 Z" fill="#d8ae78"/>
</svg>
<div class="t" style="left:696px;top:737px;font-size:11.5px;letter-spacing:-0.3px;">EN</div>
<div class="a" style="left:716px;top:734px;width:1px;height:22px;background:#808080"></div>
<div class="a" style="left:717px;top:734px;width:1px;height:22px;background:#fff"></div>
<div class="a" style="left:720px;top:728px;width:239px;height:38px;border-top:1px solid #808080;border-left:1px solid #808080;border-right:1px solid #fff;border-bottom:1px solid #fff"></div>
<svg class="a" style="left:722px;top:732px" width="146" height="30" viewBox="722 732 146 30">
<defs><linearGradient id="kr" x1="0" y1="0" x2="0" y2="1"><stop offset="0" stop-color="#f6b8c0"/><stop offset="0.5" stop-color="#ec3040"/><stop offset="1" stop-color="#d80010"/></linearGradient>
<radialGradient id="gr" cx="0.4" cy="0.35" r="0.7"><stop offset="0" stop-color="#6ad860"/><stop offset="1" stop-color="#1a8a20"/></radialGradient>
<linearGradient id="vmg" x1="0" y1="0" x2="0" y2="1"><stop offset="0" stop-color="#9a9a9a"/><stop offset="1" stop-color="#606060"/></linearGradient>
<linearGradient id="mon" x1="0" y1="0" x2="1" y2="1"><stop offset="0" stop-color="#e8e8e8"/><stop offset="1" stop-color="#a0a0a0"/></linearGradient>
<radialGradient id="rx" cx="0.4" cy="0.35" r="0.7"><stop offset="0" stop-color="#ff7070"/><stop offset="1" stop-color="#d01010"/></radialGradient></defs>
<path d="M728.3 740.3 H734 V743.6 L741.8 740.3 L729.8 753.6 H728.3 Z" fill="url(#kr)" stroke="#fff" stroke-width="0.7"/>
<path d="M735.2 746.5 L741 752 M741.6 748.2 V752.6 H737" fill="none" stroke="#fff" stroke-width="2.6"/>
<path d="M735.2 746.5 L741 752 M741.6 748.2 V752.6 H737" fill="none" stroke="#111" stroke-width="1.3"/>
<rect x="752" y="739.8" width="5.3" height="4.4" fill="#d8d8d8" stroke="#888" stroke-width="0.6"/>
<path d="M751.2 744.2 H758.8 V750 Q758.8 751.4 757.4 751.4 H752.6 Q751.2 751.4 751.2 750 Z" fill="#5a5e62"/>
<rect x="753.6" y="751" width="2.2" height="3.4" fill="#505458"/>
<circle cx="762.1" cy="749.8" r="4.9" fill="url(#gr)" stroke="#fff" stroke-width="0.6"/>
<path d="M759.6 749.8 L761.6 752 L764.8 747.4" fill="none" stroke="#fff" stroke-width="1.4"/>
<rect x="775.6" y="739.5" width="13" height="12.8" rx="1.2" fill="url(#vmg)" stroke="#3a3a3a" stroke-width="0.9"/>
<text x="782.1" y="749.6" font-family="Liberation Sans" font-size="9" font-weight="700" fill="#fff" text-anchor="middle" letter-spacing="-0.6">vm</text>
<rect x="799.4" y="739.6" width="1.9" height="14.6" fill="#fff" stroke="#8a8a8a" stroke-width="0.6"/>
<path d="M801.4 741.2 H808.2 V743.2 H815 L813.6 747 Q812 748.4 808.2 748.3 H801.4 Z" fill="#f6f6f6" stroke="#8a8a8a" stroke-width="0.7"/>
<path d="M823.5 739.4 V744.8 H828.8 V739.4 M825 739.4 V743.4 M827.4 739.4 V743.4 M826.2 745 V754.4" fill="none" stroke="#5a5a5a" stroke-width="0.9"/>
<rect x="827.6" y="741.4" width="11.2" height="9.8" fill="url(#mon)" stroke="#6a6a6a" stroke-width="0.8"/>
<path d="M831 752.8 H837" stroke="#6a6a6a" stroke-width="1.2"/>
<path d="M847 744.6 H849.6 L853.8 740.8 V753.8 L849.6 750.2 H847 Z" fill="#f4f4f4" stroke="#8a8a8a" stroke-width="0.8"/>
<circle cx="858.1" cy="749.8" r="4.2" fill="url(#rx)"/>
<path d="M856.2 747.9 L860 751.7 M860 747.9 L856.2 751.7" stroke="#fff" stroke-width="1.3"/>
</svg>
<div class="t" style="left:891px;top:731px;font-size:11px;letter-spacing:0.05px;">10:28</div>
<div class="t" style="left:876px;top:747px;font-size:11px;letter-spacing:0.078px;">01.09.2015</div>
<svg class="a" style="left:940px;top:741px" width="16" height="13" viewBox="0 0 16 13">
<rect x="0" y="0" width="16" height="13" fill="#2a60c0"/>
<rect x="1" y="1" width="14" height="9" fill="#3a78d8"/>
<rect x="0" y="10" width="16" height="3" fill="#1a2a50"/>
</svg>
</body></html>
